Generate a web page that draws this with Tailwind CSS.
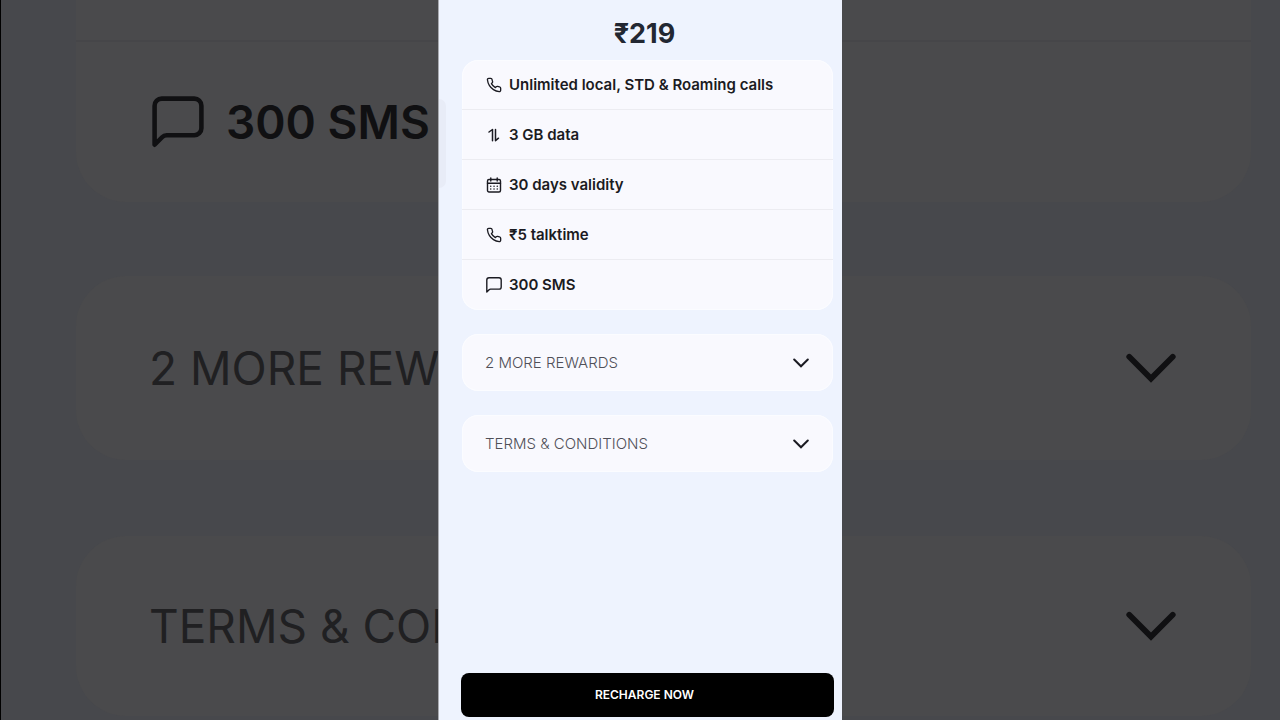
<!DOCTYPE html>
<html lang="en">
<head>
    <meta charset="UTF-8">
    <meta name="viewport" content="width=device-width, initial-scale=1.0">
    <title>Recharge - ₹219</title>
    <script src="https://cdn.jsdelivr.net/npm/@tailwindcss/browser@4"></script>
</head>
<body class="grid min-h-screen grid-cols-[minmax(0,1fr)_minmax(0,404px)_minmax(0,1fr)] bg-[#47484c] font-['Inter','Noto_Sans',sans-serif]">
    <!-- Icons -->
    <svg class="hidden">
        <symbol id="icon-phone" viewBox="0 0 24 24" fill="none" stroke="currentColor" stroke-linecap="round" stroke-linejoin="round">
            <path d="M22 16.92v3a2 2 0 0 1-2.18 2 19.79 19.79 0 0 1-8.63-3.07 19.5 19.5 0 0 1-6-6 19.79 19.79 0 0 1-3.07-8.67A2 2 0 0 1 4.11 2h3a2 2 0 0 1 2 1.72c.13.96.36 1.9.7 2.81a2 2 0 0 1-.45 2.11L8.09 9.91a16 16 0 0 0 6 6l1.27-1.27a2 2 0 0 1 2.11-.45c.91.34 1.85.57 2.81.7A2 2 0 0 1 22 16.92z"/>
        </symbol>
        <symbol id="icon-data" viewBox="0 0 16 16" fill="none" stroke="currentColor" stroke-linecap="round" stroke-linejoin="round">
            <path d="M3 5 6.500 2.500v11.200M9.500 2.500v11.200l3-2.500"/>
        </symbol>
        <symbol id="icon-calendar" viewBox="0 0 16 16" fill="none" stroke="currentColor" stroke-linecap="round" stroke-linejoin="round">
            <rect x="1.500" y="2.500" width="13" height="12.500" rx="1.500"/>
            <path d="M1.500 6.200h13M4.800 1v3M11.200 1v3"/>
            <path d="M4.700 9.300h.1M8 9.300h.1M11.200 9.300h.1M4.700 12h.1M8 12h.1M11.200 12h.1"/>
        </symbol>
        <symbol id="icon-message" viewBox="0 0 16 16" fill="none" stroke="currentColor" stroke-linecap="round" stroke-linejoin="round">
            <path d="M.8 15V3A2.200 2.200 0 0 1 3 .8h10A2.200 2.200 0 0 1 15.200 3v6.900a2.200 2.200 0 0 1-2.200 2.200H4.500a2 2 0 0 0-1.400.6z"/>
        </symbol>
        <symbol id="icon-chevron" viewBox="0 0 16 10" fill="none" stroke="currentColor" stroke-linecap="round">
            <path d="M1.200 1.500 8 8.300 14.800 1.500"/>
        </symbol>
    </svg>

    <!-- Backdrop, left side -->
    <div class="overflow-hidden border-l border-black pl-[75px] text-[46px] leading-[60px] whitespace-nowrap text-[#101012]" aria-hidden="true">
        <div class="h-[42px] border-b-2 border-[#464649] bg-[#4a4a4c]"></div>
        <div class="flex h-40 items-start gap-[22px] rounded-bl-[50px] bg-[#4a4a4c] pt-[50px] pl-[76px] font-semibold">
            <svg class="mt-1 size-[52px] shrink-0" stroke-width="1.400"><use href="#icon-message"/></svg>
            <span>300 SMS</span>
        </div>
        <div class="mt-[74px] flex h-[184px] items-center rounded-l-[50px] bg-[#4a4a4c] pl-[73px]">
            <span class="min-w-0 overflow-hidden text-[#202022]">2 MORE REWARDS</span>
        </div>
        <div class="mt-[76px] flex h-[180px] items-center rounded-l-[50px] bg-[#4a4a4c] pl-[73px]">
            <span class="min-w-0 overflow-hidden text-[#202022]">TERMS &amp; CONDITIONS</span>
        </div>
    </div>

    <!-- Plan details -->
    <main class="relative flex flex-col border-l border-[#a9abb0] bg-[#eef3fe] pt-4 pr-2 pb-[3px] pl-[22px] text-[#1b1b22]">
        <div class="absolute top-[99px] left-0 h-[89px] w-[7px] rounded-r-lg bg-[#e8ecf7]"></div>

        <h1 class="mb-2 pr-1.5 text-center text-[27px] leading-9 font-bold text-[#222732]">₹219</h1>

        <ul class="mx-px divide-y divide-[#ececf1] rounded-2xl bg-[#f9f9fe] text-[15px] leading-5 font-semibold inset-ring inset-ring-[#fbfcff]">
            <li class="flex h-[50px] items-center gap-[7px] px-6">
                <svg class="size-4" stroke-width="2"><use href="#icon-phone"/></svg>
                Unlimited local, STD &amp; Roaming calls
            </li>
            <li class="flex h-[50px] items-center gap-[7px] px-6">
                <svg class="size-4" stroke-width="1.500"><use href="#icon-data"/></svg>
                3 GB data
            </li>
            <li class="flex h-[50px] items-center gap-[7px] px-6">
                <svg class="size-4" stroke-width="1.400"><use href="#icon-calendar"/></svg>
                30 days validity
            </li>
            <li class="flex h-[50px] items-center gap-[7px] px-6">
                <svg class="size-4" stroke-width="2"><use href="#icon-phone"/></svg>
                ₹5 talktime
            </li>
            <li class="flex h-[50px] items-center gap-[7px] px-6">
                <svg class="size-4" stroke-width="1.400"><use href="#icon-message"/></svg>
                300 SMS
            </li>
        </ul>

        <div class="mx-px mt-6 flex flex-col gap-6 text-[15px] leading-5 font-light text-[#505058]">
            <button type="button" class="flex h-[57px] items-center justify-between rounded-2xl bg-[#f9f9fe] pr-6 pl-[23px] inset-ring inset-ring-[#fbfcff]">
                2 MORE REWARDS
                <svg class="h-2.5 w-4 text-[#1b1b22]" stroke-width="2"><use href="#icon-chevron"/></svg>
            </button>
            <button type="button" class="flex h-[57px] items-center justify-between rounded-2xl bg-[#f9f9fe] pr-6 pl-[23px] inset-ring inset-ring-[#fbfcff]">
                TERMS &amp; CONDITIONS
                <svg class="h-2.5 w-4 text-[#1b1b22]" stroke-width="2"><use href="#icon-chevron"/></svg>
            </button>
        </div>

        <button type="button" class="mt-auto h-11 rounded-lg bg-black pr-1.5 text-xs leading-5 font-semibold text-white">RECHARGE NOW</button>
    </main>

    <!-- Backdrop, right side -->
    <div class="overflow-hidden pr-[29px] text-[#101012]" aria-hidden="true">
        <div class="h-[42px] border-b-2 border-[#464649] bg-[#4a4a4c]"></div>
        <div class="h-40 rounded-br-[50px] bg-[#4a4a4c]"></div>
        <div class="mt-[74px] flex h-[184px] items-center justify-end rounded-r-[50px] bg-[#4a4a4c] pr-[74px]">
            <svg class="h-8 w-[52px]" stroke-width="1.800"><use href="#icon-chevron"/></svg>
        </div>
        <div class="mt-[76px] flex h-[180px] items-center justify-end rounded-r-[50px] bg-[#4a4a4c] pr-[74px]">
            <svg class="h-8 w-[52px]" stroke-width="1.800"><use href="#icon-chevron"/></svg>
        </div>
    </div>
</body>
</html>
